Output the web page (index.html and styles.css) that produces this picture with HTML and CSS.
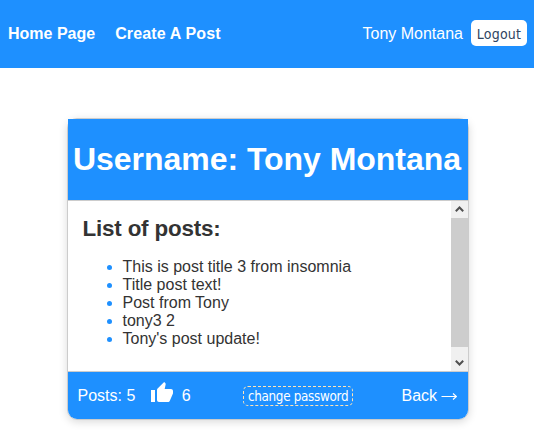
FILE: index.html
```html
<!DOCTYPE html>
<html lang="en">
<head>
<meta charset="utf-8">
<title>User profile</title>
<link rel="stylesheet" href="styles.css">
</head>
<body>
<nav class="navbar">
  <div class="links"><a>Home Page</a><a class="create">Create A Post</a></div>
  <div class="session"><span>Tony Montana</span><button class="logout">Logout</button></div>
</nav>
<main class="card">
  <header class="card-head"><h1>Username: Tony Montana</h1></header>
  <section class="card-body">
    <div class="posts">
      <h2>List of posts:</h2>
      <ul>
        <li>This is post title 3 from insomnia</li>
        <li>Title post text!</li>
        <li>Post from Tony</li>
        <li>tony3 2</li>
        <li>Tony's post update!</li>
      </ul>
    </div>
    <div class="scrollbar">
      <svg width="17" height="17" viewBox="0 0 17 17"><path d="M4.8 10.2 8.5 6.5l3.7 3.7"/></svg>
      <div class="thumb"></div>
      <svg width="17" height="17" viewBox="0 0 17 17"><path d="M4.8 6.8 8.5 10.5l3.7-3.7"/></svg>
    </div>
  </section>
  <footer class="card-foot">
    <div class="stats">
      <span>Posts: 5</span>
      <svg class="thumb-up" width="24" height="24" viewBox="0 0 24 24"><path d="M1 21h4V9H1v12zm22-11c0-1.100-.9-2-2-2h-6.310l.95-4.570.03-.32c0-.41-.17-.79-.44-1.060L14.170 1 7.590 7.590C7.220 7.950 7 8.450 7 9v10c0 1.100.9 2 2 2h9c.83 0 1.540-.5 1.840-1.220l3.020-7.050c.09-.23.14-.47.14-.73v-2z"/></svg>
      <span>6</span>
    </div>
    <button class="change">change password</button>
    <a class="back">Back <svg width="16" height="9" viewBox="0 0 16 9"><path d="M.5 4.500h15M12 1.500l3.500 3-3.500 3"/></svg></a>
  </footer>
</main>
</body>
</html>
```
FILE: styles.css
```css
* { box-sizing: border-box; }
body {
  margin: 0;
  height: 436px;
  overflow: hidden;
  background: #fff;
  color: #333;
  font: 16px/18px "Liberation Sans", Arial, sans-serif;
}
h1, h2, ul { margin: 0; }
button {
  margin: 0;
  font-family: "DejaVu Sans Condensed", "DejaVu Sans", sans-serif;
  font-stretch: condensed;
  white-space: nowrap;
}
.navbar {
  display: flex;
  justify-content: space-between;
  align-items: center;
  height: 68px;
  padding: 0 7px 0 8px;
  background: #1e90ff;
  color: #fff;
}
.links { display: flex; gap: 20px; font-weight: bold; }
.create { letter-spacing: .15px; }
.session { display: flex; align-items: center; gap: 8px; }
.logout {
  width: 56px;
  height: 26px;
  margin-top: -2px;
  padding: 2px 0 0;
  border: 0;
  border-radius: 5px;
  background: #fff;
  color: #2f4562;
  font-size: 14px;
  letter-spacing: .2px;
}
.card {
  width: 402px;
  height: 302px;
  margin: 50px 0 0 67px;
  border: 1px solid #ccc;
  border-radius: 10px;
  box-shadow: 0 2px 8px rgba(0, 0, 0, .15);
}
.card-head {
  height: 81px;
  padding-top: 22px;
  background: #1e90ff;
  color: #fff;
  text-align: center;
}
.card-head h1 {
  margin-left: -2px;
  font-size: 32px;
  line-height: 37px;
  letter-spacing: -.04px;
  white-space: nowrap;
}
.card-body {
  display: flex;
  height: 172px;
  border-top: 1px solid #ccc;
  border-bottom: 1px solid #ccc;
  background: #fff;
}
.posts { flex: 1; padding: 15px 15px 0 14.500px; }
.posts h2 { font-size: 22.400px; line-height: 25px; letter-spacing: -.18px; }
.posts ul { margin-top: 17px; padding-left: 40px; }
.posts li::marker { color: #1e90ff; }
.scrollbar {
  display: flex;
  flex-direction: column;
  justify-content: space-between;
  width: 17px;
  background: #f0f0f0;
}
.scrollbar path { fill: none; stroke: #505050; stroke-width: 2; }
.thumb { height: 129px; margin-bottom: 7px; background: #cdcdcd; }
.card-foot {
  display: flex;
  justify-content: space-between;
  align-items: center;
  height: 47px;
  padding: 0 10px 0 9.500px;
  border-radius: 0 0 9px 9px;
  background: #1e90ff;
  color: #fff;
}
.stats { display: flex; align-items: center; }
.thumb-up { margin: -5px 8px 0 14.500px; fill: #fff; }
.change {
  width: 110px;
  height: 20px;
  margin: 0 0 0 4px;
  padding: 1px 0 0;
  border: 1px dashed #ffe4b5;
  border-radius: 5px;
  background: transparent;
  color: #fff;
  font-size: 13.333px;
  letter-spacing: -.3px;
}
.back { margin-right: .5px; }
.back svg { fill: none; stroke: #fff; stroke-width: 1.200; }
```
